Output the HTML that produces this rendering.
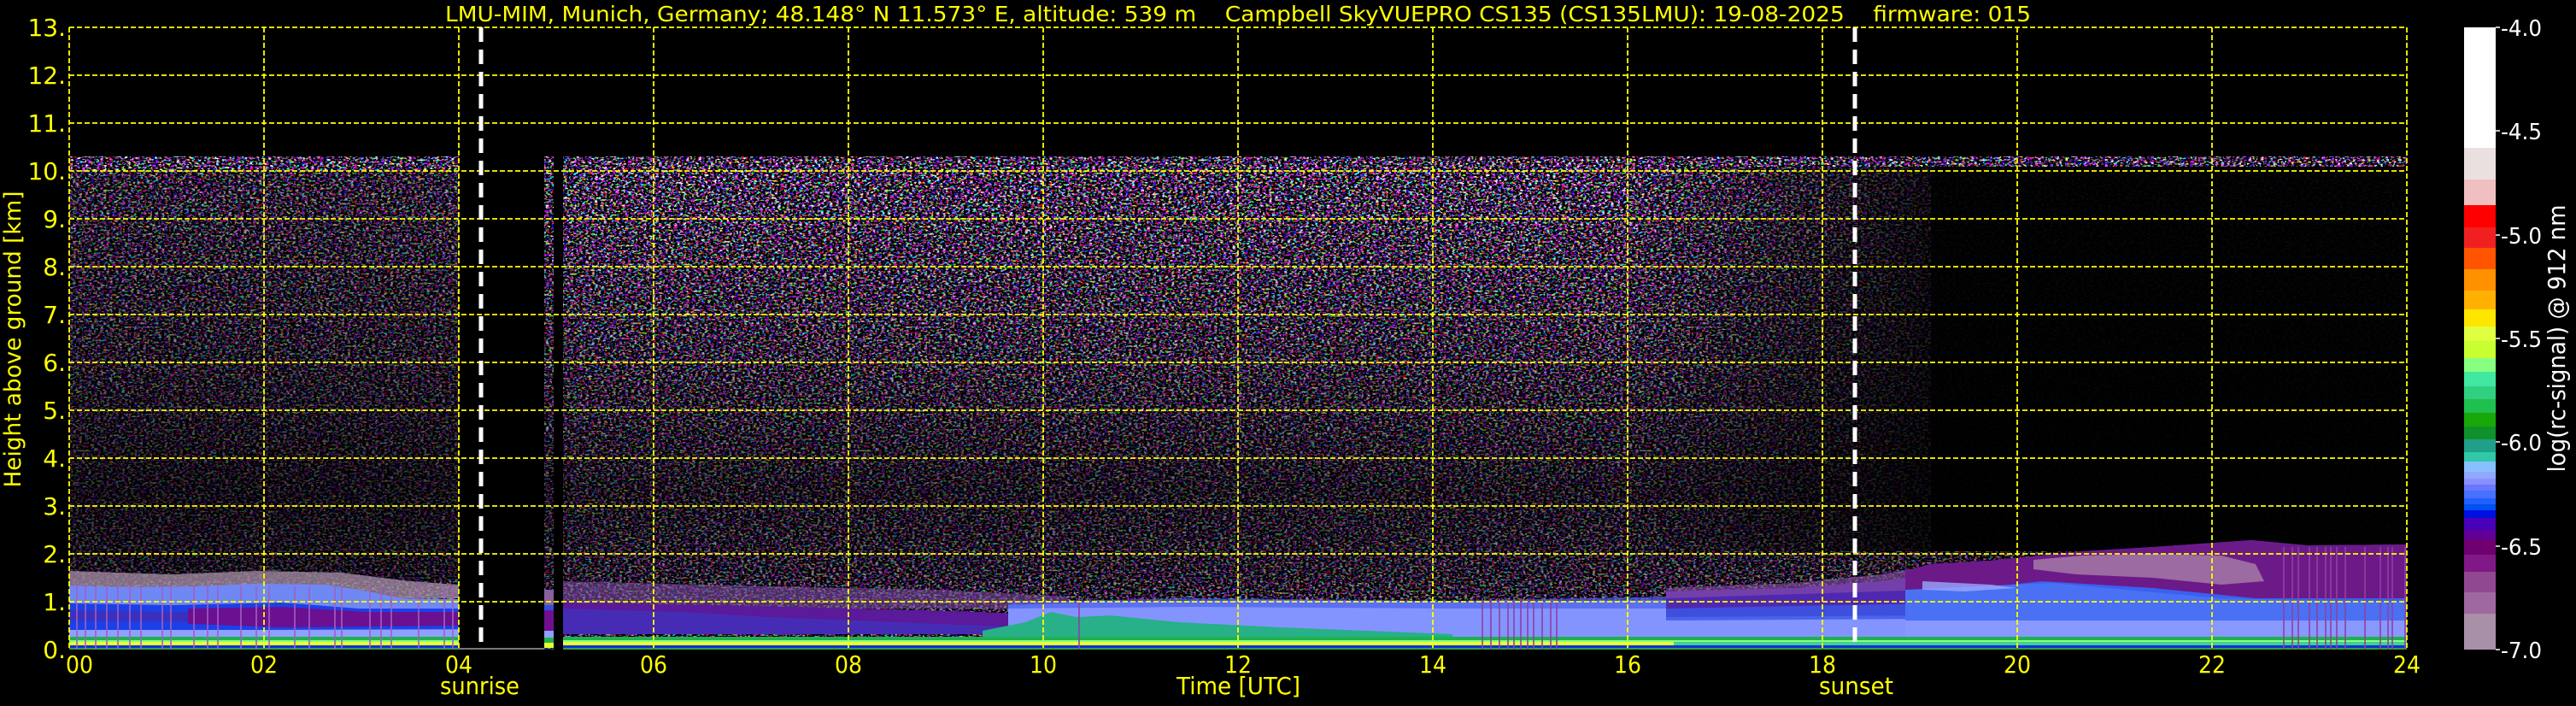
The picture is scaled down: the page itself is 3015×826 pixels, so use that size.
<!DOCTYPE html>
<html><head><meta charset="utf-8"><style>
html,body{margin:0;padding:0;background:#000;}
svg{display:block;}
text{font-family:"DejaVu Sans","Liberation Sans",sans-serif;fill:#ffff00;white-space:pre;}
</style></head><body>
<svg width="3015" height="826" viewBox="0 0 3015 826" xmlns="http://www.w3.org/2000/svg" xml:space="preserve">
<defs>
<filter id="nz" filterUnits="userSpaceOnUse" x="81" y="183" width="2736" height="577" color-interpolation-filters="sRGB">
<feTurbulence type="fractalNoise" baseFrequency="0.28 0.45" numOctaves="2" seed="7" result="t"/>
<feColorMatrix in="t" type="matrix" values="5 0 0 0 -1.9  0 5 0 0 -2.1  0 0 5 0 -1.7  0 0 0 16 -7.5"/>
</filter>
<linearGradient id="vg" x1="0" y1="183" x2="0" y2="760" gradientUnits="userSpaceOnUse">
<stop offset="0" stop-color="#000" stop-opacity="0"/>
<stop offset="0.08" stop-color="#000" stop-opacity="0.05"/>
<stop offset="0.4" stop-color="#000" stop-opacity="0.3"/>
<stop offset="0.68" stop-color="#000" stop-opacity="0.6"/>
<stop offset="0.85" stop-color="#000" stop-opacity="0.45"/>
<stop offset="1" stop-color="#000" stop-opacity="0.2"/>
</linearGradient>
<linearGradient id="hg" x1="1900" y1="0" x2="2260" y2="0" gradientUnits="userSpaceOnUse">
<stop offset="0" stop-color="#000" stop-opacity="0"/>
<stop offset="1" stop-color="#000" stop-opacity="0.8"/>
</linearGradient>
</defs>
<rect width="3015" height="826" fill="#000"/>

<!-- noise -->
<rect x="81" y="183" width="2736" height="577" filter="url(#nz)"/>
<rect x="81" y="188" width="2736" height="572" fill="url(#vg)"/>
<rect x="81" y="200" width="456" height="480" fill="#000" opacity="0.3"/>
<rect x="1900" y="195" width="917" height="450" fill="url(#hg)"/>
<rect x="2260" y="195" width="557" height="450" fill="#000" opacity="0.8"/>

<!-- gaps -->
<rect x="537" y="180" width="100" height="580" fill="#000"/>
<rect x="648" y="180" width="11" height="580" fill="#000"/>
<rect x="537" y="758" width="100" height="2" fill="#777"/>

<!-- Boundary layer: left 0-4h -->
<g>
<path d="M81 668 L200 672 L300 668 L400 670 L480 680 L537 684 L537 700 L81 700Z" fill="#a890a8" opacity="0.75"/>
<path d="M81 685 L150 687 L230 686 L300 683 L380 684 L420 690 L470 700 L537 701 L537 740 L81 740Z" fill="#7088f4"/>
<path d="M81 706 L200 708 L330 705 L420 712 L537 712 L537 736 L81 738Z" fill="#1c40e8"/>
<path d="M220 712 L330 710 L430 716 L537 716 L537 732 L330 734 L220 730Z" fill="#6a1090"/>
<path d="M81 714 L220 716 L220 728 L81 726Z" fill="#3a30c0"/>
<rect x="81" y="737" width="456" height="8" fill="#90a0ff"/>
<rect x="81" y="745" width="456" height="4" fill="#20b050"/>
<rect x="81" y="749" width="456" height="2" fill="#88ff80"/>
<rect x="81" y="751" width="456" height="4" fill="#e8ff30"/>
<rect x="81" y="755" width="456" height="3" fill="#1030e0"/>
<rect x="81" y="758" width="456" height="2" fill="#30a040"/>
</g>
<g stroke="#a060c0" stroke-width="1.6">
<path d="M90 686V760M100 686V760M112 686V760M125 686V760M138 686V760M152 686V760M165 686V760M190 686V760M200 686V760M227 686V760M243 686V760M255 686V760M282 686V760M300 686V760M315 686V760M345 686V760M362 686V760M392 686V760M400 686V760M433 686V760M446 686V760M458 686V760M490 686V760M520 686V760M530 686V760"/>
</g>
<!-- strip -->
<rect x="637" y="690" width="11" height="18" fill="#8a60a0"/>
<rect x="637" y="708" width="11" height="6" fill="#3050e0"/>
<rect x="637" y="714" width="11" height="24" fill="#701090"/>
<rect x="637" y="738" width="11" height="8" fill="#8fa0ff"/>
<rect x="637" y="746" width="11" height="6" fill="#20b050"/>
<rect x="637" y="752" width="11" height="6" fill="#e8ff30"/>

<!-- middle 5-10.5h -->
<path d="M659 680 L900 686 L1100 690 L1250 698 L1250 712 L659 712Z" fill="#8050a8" opacity="0.55"/>
<path d="M659 705 L850 708 L1000 712 L1150 716 L1230 720 L1230 742 L659 742Z" fill="#5a1a9a"/>
<path d="M659 712 L800 716 L900 722 L1050 728 L1200 734 L1200 742 L659 742Z" fill="#3838c8" opacity="0.6"/>
<!-- 10-16.5h -->
<path d="M1180 708 L1300 704 L1500 702 L1700 705 L1950 702 L1950 745 L1180 745Z" fill="#8494ff"/>
<path d="M1180 704 L1400 700 L1700 703 L1950 698 L1950 712 L1700 712 L1400 710 L1180 712Z" fill="#4a60f0" opacity="0.7"/>
<path d="M1150 738 L1200 728 L1230 716 L1260 722 L1300 720 L1380 728 L1500 734 L1650 740 L1700 742 L1700 745 L1150 745Z" fill="#28b088"/>
<!-- 16.5-19.5h -->
<path d="M1950 692 L2100 688 L2200 680 L2260 672 L2260 735 L1950 735Z" fill="#5028b0"/>
<path d="M1950 688 L2100 682 L2200 672 L2260 662 L2260 690 L1950 700Z" fill="#8a50a8" opacity="0.6"/>
<path d="M1950 722 L2260 720 L2260 745 L1950 745Z" fill="#8494ff"/>
<path d="M1950 712 L2260 706 L2260 724 L1950 726Z" fill="#3a58e8" opacity="0.8"/>
<!-- 19.5-24h -->
<path d="M2230 668 L2259 660 L2330 656 L2437 645 L2520 640 L2635 632 L2700 638 L2817 637 L2817 760 L2230 760Z" fill="#3a60f0"/>
<path d="M2230 668 L2259 660 L2330 656 L2437 645 L2520 640 L2635 632 L2700 638 L2817 637 L2817 700 L2700 700 L2640 700 L2520 688 L2390 680 L2300 690 L2230 700Z" fill="#6c1a88"/>
<path d="M2380 655 L2437 650 L2520 648 L2600 650 L2640 660 L2650 680 L2600 684 L2520 676 L2430 672 L2380 666Z" fill="#a880a8" opacity="0.8"/>
<path d="M2230 690 L2400 682 L2600 700 L2817 705 L2817 730 L2230 730Z" fill="#4a70f4"/>
<path d="M2230 726 L2817 726 L2817 745 L2230 745Z" fill="#8898ff"/>
<path d="M2250 680 L2330 684 L2360 688 L2300 692 L2250 690Z" fill="#9aa8ff" opacity="0.8"/>
<!-- bottom bands 5-24h -->
<rect x="659" y="745" width="2158" height="4" fill="#20b050"/>
<rect x="659" y="749" width="2158" height="2" fill="#88ff80"/>
<rect x="659" y="751" width="1300" height="4" fill="#e8ff30"/>
<rect x="1959" y="751" width="858" height="4" fill="#40d090"/>
<rect x="659" y="755" width="2158" height="3" fill="#1030e0"/>
<rect x="659" y="758" width="2158" height="2" fill="#30a040"/>
<g stroke="#9040a0" stroke-width="1.6">
<path d="M1263 700V760M1735 700V760M1745 700V760M1755 700V760M1765 700V760M1772 700V760M1780 700V760M1788 700V760M1795 700V760M1805 700V760M1815 700V760M1822 700V760"/>
<path d="M2673 640V760M2683 640V760M2690 640V760M2703 640V760M2712 640V760M2722 640V760M2728 640V760M2735 640V760M2745 640V760M2768 640V760M2786 640V760M2795 640V760M2800 640V760M2815 640V760"/>
</g>

<!-- grid -->
<g stroke="#ffff00" stroke-width="1.8" stroke-dasharray="6 3" fill="none">
<path d="M81 32H2817M81 88H2817M81 144H2817M81 200H2817M81 256H2817M81 312H2817M81 368H2817M81 424H2817M81 480H2817M81 536H2817M81 592H2817M81 648H2817M81 704H2817"/>
<path d="M81 32V760M309 32V760M537 32V760M765 32V760M993 32V760M1221 32V760M1449 32V760M1677 32V760M1905 32V760M2133 32V760M2361 32V760M2589 32V760M2817 32V760"/>
</g>
<!-- sunrise/sunset -->
<g stroke="#fff" stroke-width="5" stroke-dasharray="17 9" fill="none">
<path d="M563 32V760M2171 32V760"/>
</g>

<!-- title -->
<text x="521" y="25" font-size="25" textLength="1856" lengthAdjust="spacingAndGlyphs">LMU-MIM, Munich, Germany; 48.148° N 11.573° E, altitude: 539 m    Campbell SkyVUEPRO CS135 (CS135LMU): 19-08-2025    firmware: 015</text>

<!-- y ticks -->
<g font-size="28" text-anchor="end">
<text x="77" y="42">13.</text><text x="77" y="98">12.</text><text x="77" y="154">11.</text><text x="77" y="210">10.</text>
<text x="77" y="266">9.</text><text x="77" y="322">8.</text><text x="77" y="378">7.</text><text x="77" y="434">6.</text>
<text x="77" y="490">5.</text><text x="77" y="546">4.</text><text x="77" y="602">3.</text><text x="77" y="658">2.</text>
<text x="77" y="714">1.</text><text x="77" y="770">0.</text>
</g>
<text transform="translate(24,397) rotate(-90)" font-size="27" text-anchor="middle" textLength="347" lengthAdjust="spacingAndGlyphs">Height above ground [km]</text>

<!-- x ticks -->
<g font-size="28">
<text x="77" y="787" textLength="32" lengthAdjust="spacingAndGlyphs">00</text>
<text x="293" y="787" textLength="32" lengthAdjust="spacingAndGlyphs">02</text>
<text x="521" y="787" textLength="32" lengthAdjust="spacingAndGlyphs">04</text>
<text x="749" y="787" textLength="32" lengthAdjust="spacingAndGlyphs">06</text>
<text x="977" y="787" textLength="32" lengthAdjust="spacingAndGlyphs">08</text>
<text x="1205" y="787" textLength="32" lengthAdjust="spacingAndGlyphs">10</text>
<text x="1433" y="787" textLength="32" lengthAdjust="spacingAndGlyphs">12</text>
<text x="1661" y="787" textLength="32" lengthAdjust="spacingAndGlyphs">14</text>
<text x="1889" y="787" textLength="32" lengthAdjust="spacingAndGlyphs">16</text>
<text x="2117" y="787" textLength="32" lengthAdjust="spacingAndGlyphs">18</text>
<text x="2345" y="787" textLength="32" lengthAdjust="spacingAndGlyphs">20</text>
<text x="2573" y="787" textLength="32" lengthAdjust="spacingAndGlyphs">22</text>
<text x="2801" y="787" textLength="32" lengthAdjust="spacingAndGlyphs">24</text>
<text x="515" y="812" textLength="93" lengthAdjust="spacingAndGlyphs">sunrise</text>
<text x="1377" y="812" textLength="145" lengthAdjust="spacingAndGlyphs">Time [UTC]</text>
<text x="2129" y="812" textLength="87" lengthAdjust="spacingAndGlyphs">sunset</text>
</g>

<!-- colorbar -->
<g>
<rect x="2884" y="32" width="37" height="141" fill="#ffffff"/>
<rect x="2884" y="173" width="37" height="37" fill="#ebe0e0"/>
<rect x="2884" y="210" width="37" height="30" fill="#f0c0c0"/>
<rect x="2884" y="240" width="37" height="26" fill="#ff0000"/>
<rect x="2884" y="266" width="37" height="24" fill="#f02020"/>
<rect x="2884" y="290" width="37" height="25" fill="#ff5500"/>
<rect x="2884" y="315" width="37" height="25" fill="#ff9000"/>
<rect x="2884" y="340" width="37" height="22" fill="#ffb000"/>
<rect x="2884" y="362" width="37" height="20" fill="#ffe600"/>
<rect x="2884" y="382" width="37" height="17" fill="#e0ff40"/>
<rect x="2884" y="399" width="37" height="20" fill="#c8ff30"/>
<rect x="2884" y="419" width="37" height="16" fill="#88ff80"/>
<rect x="2884" y="435" width="37" height="17" fill="#40e8a0"/>
<rect x="2884" y="452" width="37" height="15" fill="#30d080"/>
<rect x="2884" y="467" width="37" height="16" fill="#20c050"/>
<rect x="2884" y="483" width="37" height="16" fill="#18a808"/>
<rect x="2884" y="499" width="37" height="15" fill="#10902a"/>
<rect x="2884" y="514" width="37" height="15" fill="#20a088"/>
<rect x="2884" y="529" width="37" height="11" fill="#30c8a8"/>
<rect x="2884" y="540" width="37" height="12" fill="#88c0ff"/>
<rect x="2884" y="552" width="37" height="8" fill="#90a8ff"/>
<rect x="2884" y="560" width="37" height="7" fill="#8890ff"/>
<rect x="2884" y="567" width="37" height="7" fill="#6878ff"/>
<rect x="2884" y="574" width="37" height="9" fill="#4870ff"/>
<rect x="2884" y="583" width="37" height="7" fill="#2060ff"/>
<rect x="2884" y="590" width="37" height="7" fill="#0050f0"/>
<rect x="2884" y="597" width="37" height="9" fill="#0010e0"/>
<rect x="2884" y="606" width="37" height="14" fill="#4800b8"/>
<rect x="2884" y="620" width="37" height="11" fill="#600098"/>
<rect x="2884" y="631" width="37" height="18" fill="#700070"/>
<rect x="2884" y="649" width="37" height="20" fill="#801888"/>
<rect x="2884" y="669" width="37" height="24" fill="#904890"/>
<rect x="2884" y="693" width="37" height="25" fill="#a068a0"/>
<rect x="2884" y="718" width="37" height="42" fill="#a890a8"/>
</g>
<g stroke="#fff" stroke-width="1.5"><path d="M2921 32H2926M2921 153H2926M2921 275H2926M2921 396H2926M2921 517H2926M2921 639H2926M2921 760H2926"/></g>
<g font-size="26">
<text x="2927" y="42" textLength="48" lengthAdjust="spacingAndGlyphs" style="fill:#fff">-4.0</text>
<text x="2927" y="163" textLength="48" lengthAdjust="spacingAndGlyphs" style="fill:#fff">-4.5</text>
<text x="2927" y="285" textLength="48" lengthAdjust="spacingAndGlyphs" style="fill:#fff">-5.0</text>
<text x="2927" y="406" textLength="48" lengthAdjust="spacingAndGlyphs" style="fill:#fff">-5.5</text>
<text x="2927" y="527" textLength="48" lengthAdjust="spacingAndGlyphs" style="fill:#fff">-6.0</text>
<text x="2927" y="649" textLength="48" lengthAdjust="spacingAndGlyphs" style="fill:#fff">-6.5</text>
<text x="2927" y="770" textLength="48" lengthAdjust="spacingAndGlyphs" style="fill:#fff">-7.0</text>
</g>
<text transform="translate(3002,396) rotate(-90)" font-size="28" text-anchor="middle" textLength="313" lengthAdjust="spacingAndGlyphs" style="fill:#fff">log(rc-signal) @ 912 nm</text>
</svg>
</body></html>
